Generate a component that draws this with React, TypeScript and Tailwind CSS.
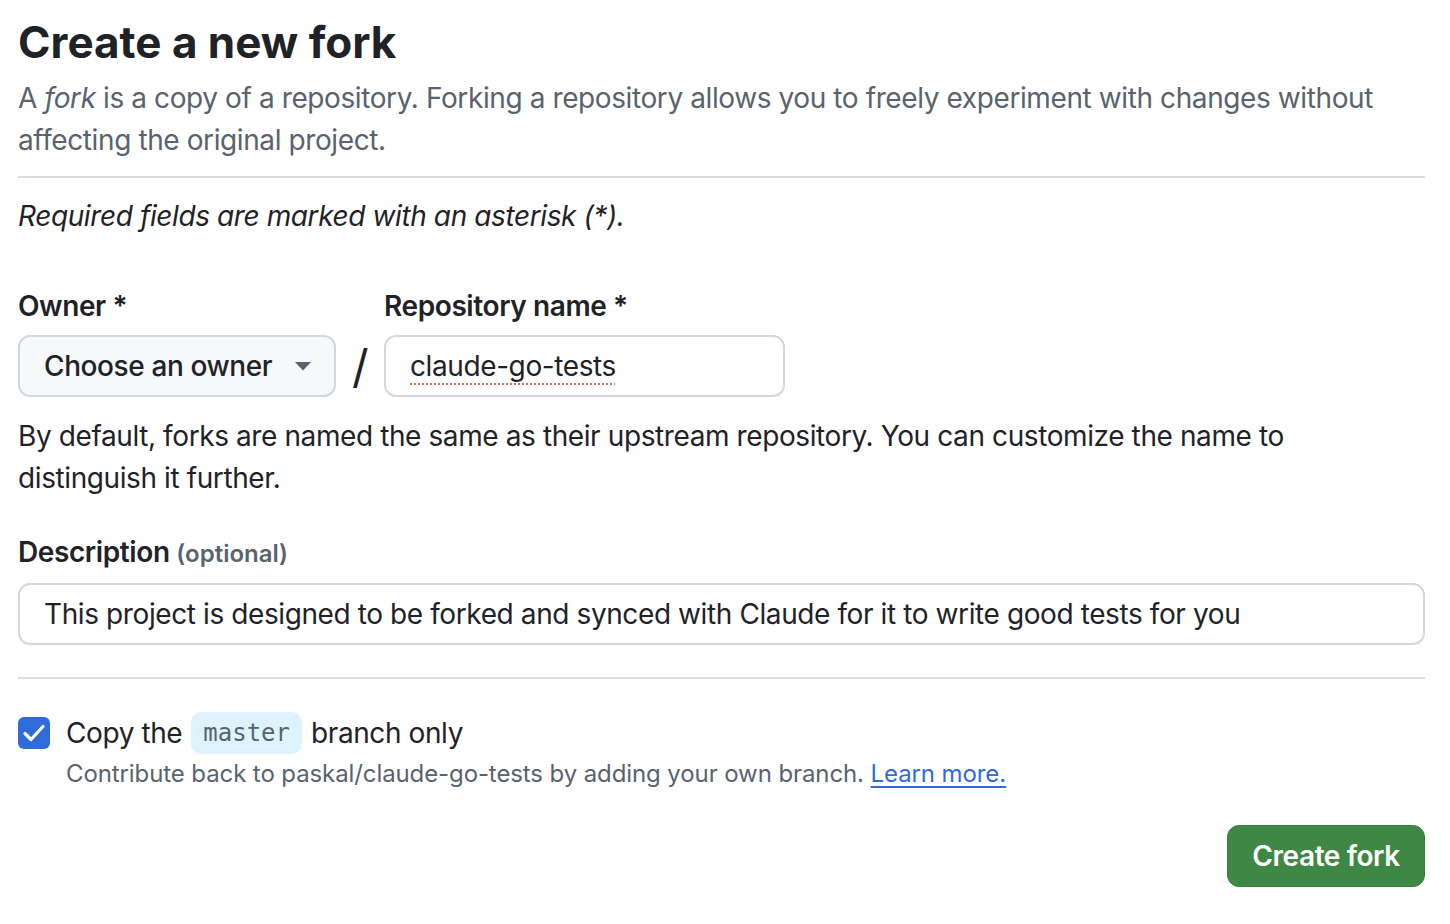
import React from "react";

export default function App() {
  return (
    <div
      className="w-[1450px] h-[924px] bg-white pl-[18px] pr-[25px] pt-[14px] text-[#1f2328] overflow-hidden tracking-[-0.4px]"
      style={{ fontFamily: "Inter, 'Noto Sans', 'Liberation Sans', sans-serif" }}
    >
      <h1 className="text-[44px] leading-[56px] font-bold tracking-[0px]">Create a new fork</h1>
      <p className="mt-[7px] text-[28px] leading-[42px] text-[#59636e]">
        A <em>fork</em> is a copy of a repository. Forking a repository allows you to freely experiment with changes without
        affecting the original project.
      </p>
      <div className="mt-[15px] h-[2px] bg-[#d8dee4]" />
      <p className="mt-[17px] text-[28px] leading-[42px] italic">Required fields are marked with an asterisk (*).</p>

      <div className="mt-[48px] grid grid-cols-[318px_48px_401px]">
        <div className="text-[28px] leading-[42px] font-semibold">Owner *</div>
        <div />
        <div className="text-[28px] leading-[42px] font-semibold">Repository name *</div>

        <div className="mt-[8px] h-[62px] rounded-[12px] border-2 border-[#d3d8de] bg-[#f6f8fa] flex items-center justify-between pl-[24px] pr-[23px]">
          <span className="text-[28px] leading-[42px] font-medium">Choose an owner</span>
          <svg width="16" height="9" viewBox="0 0 16 9">
            <path d="M0 0 L16 0 L8 8.5 Z" fill="#59636e" />
          </svg>
        </div>
        <div className="mt-[8px] h-[62px] flex items-center justify-center">
          <span className="text-[46px] leading-none font-normal text-[#1f2328]">/</span>
        </div>
        <div className="mt-[8px] h-[62px] rounded-[12px] border-2 border-[#d3d8de] bg-white flex items-center pl-[24px]">
          <span className="text-[28px] leading-[42px] underline decoration-dotted decoration-[#e0675c] decoration-2 underline-offset-[7px]">
            claude-go-tests
          </span>
        </div>
      </div>

      <p className="mt-[18px] text-[28px] leading-[42px]">
        By default, forks are named the same as their upstream repository. You can customize the name to distinguish it further.
      </p>

      <div className="mt-[32px] text-[28px] leading-[42px] font-semibold">
        Description <span className="text-[24px] text-[#59636e] tracking-[0px]">(optional)</span>
      </div>
      <div className="mt-[8px] h-[62px] rounded-[12px] border-2 border-[#d3d8de] bg-white flex items-center pl-[24px]">
        <span className="text-[28px] leading-[42px]">
          This project is designed to be forked and synced with Claude for it to write good tests for you
        </span>
      </div>

      <div className="mt-[32px] h-[2px] bg-[#d8dee4]" />

      <div className="mt-[33px] flex items-center">
        <div className="w-[32px] h-[32px] rounded-[6px] bg-[#2f6bd9] flex items-center justify-center">
          <svg width="24" height="20" viewBox="0 0 24 20">
            <path d="M3 10.5 L9 16.5 L21 3.5" fill="none" stroke="white" strokeWidth="3.2" strokeLinecap="round" strokeLinejoin="round" />
          </svg>
        </div>
        <div className="ml-[16px] flex items-center text-[28px] leading-[42px]">
          <span>Copy the</span>
          <code
            className="ml-[9px] mr-[9px] px-[12px] h-[42px] flex items-center rounded-[10px] bg-[#ddf4ff] text-[24px] text-[#59636e] tracking-[0px]"
            style={{ fontFamily: "'DejaVu Sans Mono', 'Liberation Mono', monospace" }}
          >
            master
          </code>
          <span>branch only</span>
        </div>
      </div>
      <p className="ml-[48px] mt-[2px] text-[24px] leading-[36px] text-[#59636e] tracking-[-0.1px]">
        Contribute back to paskal/claude-go-tests by adding your own branch.{" "}
        <a className="text-[#2f6bd9] underline underline-offset-[4px]">Learn more.</a>
      </p>

      <div className="mt-[33px] flex justify-end">
        <button className="h-[62px] w-[198px] rounded-[12px] bg-[#3f8745] border border-[#3a7d40] text-white text-[28px] font-semibold">
          Create fork
        </button>
      </div>
    </div>
  );
}
